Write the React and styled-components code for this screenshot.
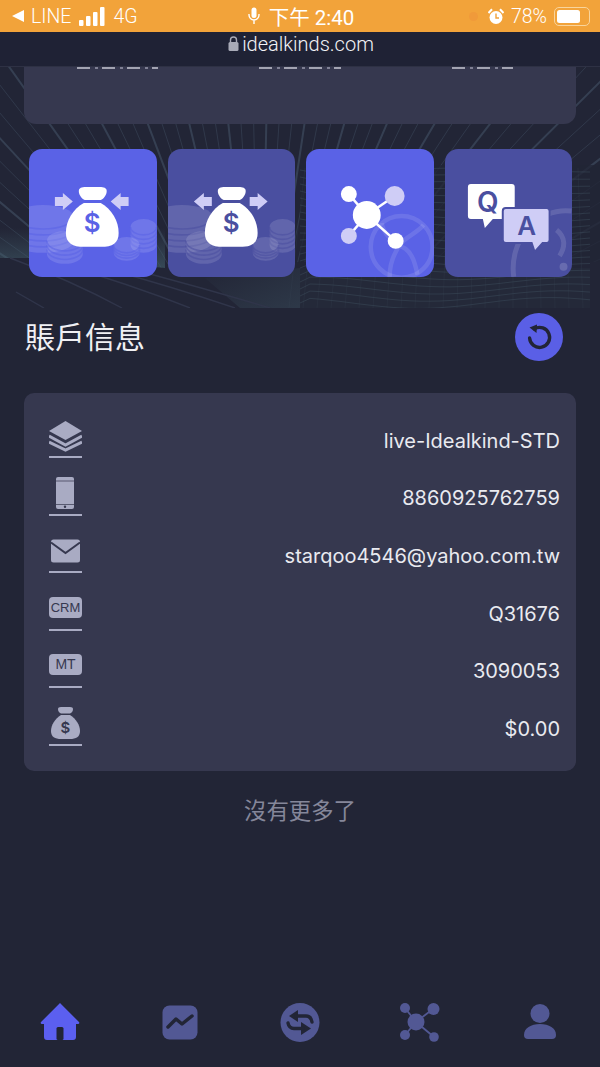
import styled, { createGlobalStyle } from 'styled-components';

const bg = '#222536';
const panel = '#36384f';
const bright = '#5a62e6';
const dim = '#4a4fa0';
const lilac = '#cfcdf6';
const iconGray = '#a9abc3';
const navGray = '#525894';
const navActive = '#5b5ff0';

const GlobalStyle = createGlobalStyle`
  html, body {
    margin: 0;
    padding: 0;
    background: ${bg};
  }
  * {
    box-sizing: border-box;
  }
`;

const accountRows = [
  { icon: 'stack', value: 'live-Idealkind-STD' },
  { icon: 'phone', value: '8860925762759' },
  { icon: 'mail', value: 'starqoo4546@yahoo.com.tw' },
  { icon: 'crm', value: 'Q31676' },
  { icon: 'mt', value: '3090053' },
  { icon: 'bag', value: '$0.00' },
];

// background mesh lines, worked out once
const fanLines = Array.from({ length: 60 }, (_, i) => {
  const a = Math.PI * (1.1 + (i / 59) * 0.8);
  return { x: 260 + Math.cos(a) * 600, y: 420 + Math.sin(a) * 600, strong: i % 3 === 0 };
});

const wavePath = (y, amp, phase) => {
  let d = `M300 ${y}`;
  for (let x = 310; x <= 590; x += 10) {
    d += ` L${x} ${(y + Math.sin(x / 42 + phase) * amp).toFixed(1)}`;
  }
  return d;
};

const waves = Array.from({ length: 20 }, (_, i) => wavePath(170 + i * 7, 2 + i * 0.18, i * 0.22));
const ribs = Array.from({ length: 22 }, (_, i) => 305 + i * 13);
const curves = [
  'M10 258 Q70 280 122 308',
  'M60 264 Q130 284 190 308',
  'M110 270 Q170 286 235 308',
  'M150 274 Q210 290 270 308',
  'M16 292 Q30 300 44 308',
];

function Mesh() {
  return (
    <MeshSvg viewBox="0 67 600 241" preserveAspectRatio="none">
      <defs>
        <linearGradient id="glow" x1="0" y1="0" x2="0" y2="1">
          <stop offset="0" stopColor="#43606c" stopOpacity="0" />
          <stop offset="1" stopColor="#43606c" stopOpacity="0.6" />
        </linearGradient>
        <linearGradient id="floor" x1="0" y1="0" x2="1" y2="1">
          <stop offset="0" stopColor="#3f5664" stopOpacity="0" />
          <stop offset="1" stopColor="#3f5664" stopOpacity="0.4" />
        </linearGradient>
      </defs>
      {fanLines.map((l, i) => (
        <line
          key={i}
          x1="260"
          y1="420"
          x2={l.x}
          y2={l.y}
          stroke="#46566a"
          strokeWidth={l.strong ? 2 : 1}
          opacity={l.strong ? 0.55 : 0.4}
        />
      ))}
      <polygon points="0,262 0,228 165,228 165,268 60,262 30,258" fill="url(#glow)" />
      <polygon points="0,258 30,258 60,262 165,268 300,262 300,308 0,308" fill={bg} />
      <polygon points="205,278 300,268 300,308 240,308" fill="url(#floor)" />
      {curves.map((d, i) => (
        <path key={i} d={d} fill="none" stroke="#30354a" strokeWidth="1.4" />
      ))}
      <rect x="300" y="165" width="300" height="97" fill={bg} opacity="0.75" />
      <rect x="300" y="262" width="300" height="46" fill={bg} />
      <rect x="300" y="268" width="290" height="40" fill="#3f5664" opacity="0.08" />
      {waves.map((d, i) => (
        <path key={i} d={d} fill="none" stroke="#3e4d5c" strokeWidth="0.8" opacity="0.6" />
      ))}
      {ribs.map((x, i) => (
        <line key={i} x1={x} y1="168" x2={x - 16 + i} y2="308" stroke="#3e4d5c" strokeWidth="0.6" opacity="0.3" />
      ))}
    </MeshSvg>
  );
}

function Coins({ cx, top, bottom, rx, ry, n, tone }) {
  const cy = top + ry;
  const low = bottom - ry;
  const step = (low - cy) / n;
  return (
    <g>
      <path
        d={`M${cx - rx} ${cy} A${rx} ${ry} 0 0 1 ${cx + rx} ${cy} V${low} A${rx} ${ry} 0 0 1 ${cx - rx} ${low} Z`}
        fill="#fff"
        fillOpacity="0.13"
      />
      {Array.from({ length: n }, (_, i) => {
        const y = cy + step * i;
        return (
          <path
            key={i}
            d={`M${cx - rx} ${y} A${rx} ${ry} 0 0 0 ${cx + rx} ${y}`}
            fill="none"
            stroke={tone}
            strokeOpacity="0.55"
            strokeWidth="1.6"
          />
        );
      })}
    </g>
  );
}

function BagShape({ fill, dollar }) {
  return (
    <g>
      <path
        d="M50 42 C50 39 53 38 57 38 C60 38 67 38 71 38 C75 38 78 39 78 42 C78 46 75 50 72 51 L56 51 C53 50 50 46 50 42 Z"
        fill={fill}
      />
      <path
        d="M55 54 L72 54 C83 60 90 72 90 84 C90 94 84 98 72 98 L55 98 C44 98 37 94 37 84 C37 72 44 60 55 54 Z"
        fill={fill}
      />
      <text x="63.5" y="83" textAnchor="middle" fontFamily="'Inter', sans-serif" fontWeight="600" fontSize="26" fill={dollar}>
        $
      </text>
    </g>
  );
}

function MoneyTile({ flow, tone }) {
  const arrows =
    flow === 'in'
      ? ['M26 48 H34 V44 L44 52.5 L34 61 V57 H26 Z', 'M100 48 H92 V44 L82 52.5 L92 61 V57 H100 Z']
      : ['M44 48 H36 V44 L26 52.5 L36 61 V57 H44 Z', 'M82 48 H90 V44 L100 52.5 L90 61 V57 H82 Z'];
  return (
    <TileArt viewBox="0 0 128 128">
      <Coins cx={14} top={56} bottom={104} rx={31} ry={12} n={4} tone={tone} />
      <Coins cx={36} top={82} bottom={115} rx={18} ry={10} n={3} tone={tone} />
      <Coins cx={115} top={70} bottom={104} rx={13} ry={8} n={4} tone={tone} />
      <Coins cx={98} top={88} bottom={112} rx={13} ry={8} n={3} tone={tone} />
      {arrows.map((d) => (
        <path key={d} d={d} fill={lilac} />
      ))}
      <BagShape fill="#fff" dollar={tone} />
    </TileArt>
  );
}

function NetworkTile() {
  return (
    <TileArt viewBox="0 0 128 128">
      <g fill="none" stroke="#fff" strokeOpacity="0.11" strokeWidth="4.5">
        <circle cx="96" cy="98" r="31" />
        <path d="M76 74 C78 88 92 96 100 100 C108 106 110 118 112 126" />
        <path d="M118 76 C112 84 100 88 96 94 C88 104 84 116 84 128" />
      </g>
      <g stroke="#fff" strokeWidth="2.5">
        <line x1="43" y1="45" x2="61" y2="66" />
        <line x1="89" y1="47" x2="61" y2="66" />
        <line x1="43" y1="87" x2="61" y2="66" />
        <line x1="90" y1="92" x2="61" y2="66" />
      </g>
      <circle cx="61" cy="66" r="14" fill="#fff" />
      <circle cx="43" cy="45" r="8" fill="#fff" />
      <circle cx="89" cy="47" r="10" fill={lilac} />
      <circle cx="43" cy="87" r="8" fill={lilac} />
      <circle cx="90" cy="92" r="8" fill="#fff" />
    </TileArt>
  );
}

function QaTile() {
  return (
    <TileArt viewBox="0 0 128 128">
      <g fill="none" stroke="#fff" strokeOpacity="0.13" strokeWidth="5">
        <path d="M69 128 C64 92 92 58 127 62" />
        <path d="M112 81 C121 88 121 98 115 107" />
      </g>
      <circle cx="119" cy="118" r="4" fill="#fff" fillOpacity="0.16" />
      <path
        d="M26 35 H67 Q70 35 70 38 V67 Q70 70 67 70 H48 L40 79 L38 70 H26 Q23 70 23 67 V38 Q23 35 26 35 Z"
        fill="#fff"
      />
      <text x="43" y="63" textAnchor="middle" fontFamily="'Inter', sans-serif" fontWeight="600" fontSize="28" fill={dim}>
        Q
      </text>
      <path
        d="M61 59 H102 Q105 59 105 62 V91 Q105 94 102 94 H98 L90 103 L87 94 H61 Q58 94 58 91 V62 Q58 59 61 59 Z"
        fill={lilac}
        stroke={dim}
        strokeWidth="2"
      />
      <text x="82" y="86" textAnchor="middle" fontFamily="'Inter', sans-serif" fontWeight="600" fontSize="26" fill={dim}>
        A
      </text>
    </TileArt>
  );
}

function RowIcon({ name }) {
  if (name === 'stack') {
    return (
      <svg width="33" height="44" viewBox="0 0 33 44">
        <path d="M16.5 9 L33 19 L16.5 28 L0 19 Z" fill={iconGray} />
        <path d="M0 24 L16.5 33 L33 24" fill="none" stroke={iconGray} strokeWidth="3" />
        <path d="M0 30 L16.5 38 L33 30" fill="none" stroke={iconGray} strokeWidth="3" />
      </svg>
    );
  }
  if (name === 'phone') {
    return (
      <svg width="33" height="44" viewBox="0 0 33 44">
        <rect x="7" y="7" width="18" height="32" rx="2" fill={iconGray} />
        <rect x="7" y="10.5" width="18" height="1" fill={panel} opacity="0.7" />
        <rect x="7" y="34" width="18" height="1" fill={panel} opacity="0.7" />
        <circle cx="16" cy="36.8" r="1.2" fill={panel} />
      </svg>
    );
  }
  if (name === 'mail') {
    return (
      <svg width="33" height="44" viewBox="0 0 33 44">
        <rect x="2" y="12.5" width="29" height="23" rx="2.5" fill={iconGray} />
        <path d="M2 15.5 L16.5 26 L31 15.5" fill="none" stroke={panel} strokeWidth="2" />
      </svg>
    );
  }
  if (name === 'crm' || name === 'mt') {
    return (
      <svg width="33" height="44" viewBox="0 0 33 44">
        <rect x="0" y="12" width="33" height="21" rx="4" fill={iconGray} />
        <text x="16.5" y="27" textAnchor="middle" fontFamily="'Liberation Sans', sans-serif" fontSize={name === 'crm' ? 13 : 14} fill={panel}>
          {name.toUpperCase()}
        </text>
      </svg>
    );
  }
  return (
    <svg width="33" height="44" viewBox="0 0 33 44">
      <path d="M9 9 Q9 7 12 7 H21 Q24 7 24 9 Q24 12 21 13.5 H12 Q9 12 9 9 Z" fill={iconGray} />
      <path d="M12 15 H21 C27 19 31 25 31 31 C31 37 27 39 21 39 H12 C6 39 2 37 2 31 C2 25 6 19 12 15 Z" fill={iconGray} />
      <text x="16.5" y="33" textAnchor="middle" fontFamily="'Inter', sans-serif" fontWeight="600" fontSize="15" fill={panel}>
        $
      </text>
    </svg>
  );
}

function HomeIcon() {
  return (
    <svg width="40" height="38" viewBox="0 0 40 38">
      <path d="M20 0 L39 19 Q40 21 38 21 H36 V34 Q36 37 33 37 H7 Q4 37 4 34 V21 H2 Q0 21 1 19 Z" fill={navActive} />
      <rect x="16.5" y="24" width="7" height="13" rx="1.5" fill={bg} />
    </svg>
  );
}

function ChartIcon() {
  return (
    <svg width="36" height="35" viewBox="0 0 36 35">
      <rect x="0.5" y="0.5" width="35" height="34" rx="7" fill={navGray} />
      <path d="M6 22 L14 14 L20 19 L30 11" fill="none" stroke={bg} strokeWidth="3.5" strokeLinecap="round" strokeLinejoin="round" />
    </svg>
  );
}

function SwapIcon() {
  return (
    <svg width="40" height="39" viewBox="0 0 40 39">
      <circle cx="20" cy="19.5" r="19.5" fill={navGray} />
      <path d="M9 13 L18 7 V19 Z" fill={bg} />
      <path d="M16 13 H26 Q31 13 32 19" fill="none" stroke={bg} strokeWidth="3.4" strokeLinecap="round" />
      <path d="M31 25.5 L21 19 V32 Z" fill={bg} />
      <path d="M23 25.5 H14 Q9 25.5 8 20" fill="none" stroke={bg} strokeWidth="3.4" strokeLinecap="round" />
    </svg>
  );
}

function NetIcon() {
  return (
    <svg width="40" height="39" viewBox="0 0 40 39">
      <g stroke={navGray} strokeWidth="1.8">
        <line x1="5" y1="5" x2="16" y2="19" />
        <line x1="33" y1="6" x2="16" y2="19" />
        <line x1="5" y1="32" x2="16" y2="19" />
        <line x1="34" y1="34" x2="16" y2="19" />
      </g>
      <circle cx="16" cy="19" r="8.5" fill={navGray} />
      <circle cx="5" cy="5" r="5" fill={navGray} />
      <circle cx="33.5" cy="6" r="6" fill={navGray} />
      <circle cx="5" cy="32" r="5" fill={navGray} />
      <circle cx="34" cy="34" r="4.8" fill={navGray} />
    </svg>
  );
}

function UserIcon() {
  return (
    <svg width="32" height="36" viewBox="0 0 32 36">
      <ellipse cx="16" cy="9.5" rx="9.5" ry="9.5" fill={navGray} />
      <path d="M0 31 C0 24 7 20 16 20 C25 20 32 24 32 31 Q32 35 28 35 H4 Q0 35 0 31 Z" fill={navGray} />
    </svg>
  );
}

export default function App() {
  return (
    <Page>
      <GlobalStyle />
      <StatusBar>
        <StatusSide>
          <BackArrow />
          <span>LINE</span>
          <Signal viewBox="0 0 27 19" width="27" height="19">
            <rect x="0" y="13" width="4.5" height="6" rx="1" fill="#fff" />
            <rect x="7" y="9" width="4.5" height="10" rx="1" fill="#fff" />
            <rect x="14" y="5" width="4.5" height="14" rx="1" fill="#fff" />
            <rect x="21" y="0" width="4.5" height="19" rx="1" fill="#fff" />
          </Signal>
          <span>4G</span>
        </StatusSide>
        <StatusClock>
          <svg width="12" height="18" viewBox="0 0 12 18">
            <rect x="3.5" y="0.5" width="5" height="10.5" rx="2.5" fill="#fff" />
            <path d="M1 7 V8 A5 5 0 0 0 11 8 V7 M6 13 V17" fill="none" stroke="#fff" strokeWidth="1.4" />
          </svg>
          <span>下午 2:40</span>
        </StatusClock>
        <StatusSide $end>
          <RecordDot />
          <svg width="16" height="17" viewBox="0 0 16 17">
            <circle cx="8" cy="9.5" r="6.5" fill="#fff" />
            <path d="M8 5.5 V10 H11" fill="none" stroke="#f2a33a" strokeWidth="1.4" />
            <path d="M0.5 5 L4 1.2 M15.5 5 L12 1.2" stroke="#fff" strokeWidth="2" />
          </svg>
          <span>78%</span>
          <Battery>
            <BatteryFill />
          </Battery>
        </StatusSide>
      </StatusBar>
      <UrlBar>
        <svg width="11" height="15" viewBox="0 0 11 15">
          <rect x="0.5" y="6" width="10" height="9" rx="1.5" fill="#a9abb8" />
          <path d="M2.5 6 V4 A3 3 0 0 1 8.5 4 V6" fill="none" stroke="#a9abb8" strokeWidth="1.4" />
        </svg>
        <span>idealkinds.com</span>
      </UrlBar>
      <Content>
        <Mesh />
        <TopCard>
          <ScrolledLabel $width={81} $offset={0} />
          <ScrolledLabel $width={82} $offset={101} />
          <ScrolledLabel $width={61} $offset={111} />
        </TopCard>
        <Tiles>
          <Tile $tone={bright}>
            <MoneyTile flow="in" tone={bright} />
          </Tile>
          <Tile $tone={dim}>
            <MoneyTile flow="out" tone={dim} />
          </Tile>
          <Tile $tone={bright}>
            <NetworkTile />
          </Tile>
          <Tile $tone={dim}>
            <QaTile />
          </Tile>
        </Tiles>
        <SectionHead>
          <Title>賬戶信息</Title>
          <RefreshButton>
            <svg width="48" height="48" viewBox="0 0 48 48">
              <path d="M19.5 15.8 A10 10 0 1 1 14.6 25" fill="none" stroke={bg} strokeWidth="3.4" strokeLinecap="round" />
              <path d="M14.5 14.5 L22 11.5 L21.5 20 Z" fill={bg} />
            </svg>
          </RefreshButton>
        </SectionHead>
        <InfoCard>
          {accountRows.map((row) => (
            <InfoRow key={row.icon}>
              <IconCell>
                <RowIcon name={row.icon} />
              </IconCell>
              <Value>{row.value}</Value>
            </InfoRow>
          ))}
        </InfoCard>
        <NoMore>沒有更多了</NoMore>
        <BottomNav>
          <NavItem><HomeIcon /></NavItem>
          <NavItem><ChartIcon /></NavItem>
          <NavItem><SwapIcon /></NavItem>
          <NavItem><NetIcon /></NavItem>
          <NavItem><UserIcon /></NavItem>
        </BottomNav>
      </Content>
    </Page>
  );
}

const Page = styled.div`
  width: 600px;
  height: 1067px;
  overflow: hidden;
  display: flex;
  flex-direction: column;
  background: ${bg};
  font-family: 'Inter', 'Noto Sans CJK TC', sans-serif;
  color: #fff;
`;

const StatusBar = styled.div`
  height: 32px;
  flex: none;
  padding: 0 10px 0 12px;
  background: #f2a33a;
  display: grid;
  grid-template-columns: 1fr auto 1fr;
  align-items: center;
  font-family: 'Roboto', 'Noto Sans CJK TC', sans-serif;
  font-size: 19.5px;
  font-weight: 300;
  color: #fff;
`;

const StatusSide = styled.div`
  display: flex;
  align-items: center;
  gap: 7px;
  justify-content: ${(p) => (p.$end ? 'flex-end' : 'flex-start')};
`;

const BackArrow = styled.i`
  width: 0;
  height: 0;
  border-style: solid;
  border-width: 6.5px 12px 6.5px 0;
  border-color: transparent #fff transparent transparent;
`;

const Signal = styled.svg`
  margin-left: 1px;
`;

const StatusClock = styled.div`
  display: flex;
  align-items: center;
  gap: 9px;
  font-size: 20.5px;
  font-weight: 400;
`;

const RecordDot = styled.i`
  width: 9px;
  height: 9px;
  margin-right: 3px;
  border-radius: 50%;
  background: #f09a3a;
`;

const Battery = styled.div`
  width: 36px;
  height: 19px;
  padding: 2px;
  border: 1.5px solid #f9d49b;
  border-radius: 5px;
`;

const BatteryFill = styled.div`
  width: 78%;
  height: 100%;
  border-radius: 2.5px;
  background: #fff;
`;

const UrlBar = styled.div`
  height: 35px;
  flex: none;
  padding-bottom: 11px;
  padding-left: 2px;
  background: #1f2235;
  border-bottom: 1px solid #2e3144;
  display: flex;
  align-items: center;
  justify-content: center;
  gap: 3px;
  font-family: 'Roboto', sans-serif;
  font-size: 20px;
  font-weight: 300;
  color: #f2f2f6;
`;

const Content = styled.main`
  position: relative;
  flex: 1;
  display: flex;
  flex-direction: column;
`;

const MeshSvg = styled.svg`
  position: absolute;
  top: 0;
  left: 0;
  width: 600px;
  height: 241px;
`;

const TopCard = styled.section`
  position: relative;
  height: 57px;
  margin: 0 24px;
  padding-left: 53px;
  background: ${panel};
  border-radius: 0 0 12px 12px;
  display: flex;
`;

// last pixels of the labels that have scrolled up under the address bar
const ScrolledLabel = styled.i`
  width: ${(p) => p.$width}px;
  height: 2px;
  margin-left: ${(p) => p.$offset}px;
  background: repeating-linear-gradient(90deg, #a3a4b2 0 13px, transparent 13px 18px, #7f8094 18px 21px, transparent 21px 25px);
`;

const Tiles = styled.div`
  position: relative;
  margin-top: 25px;
  padding: 0 28px 0 29px;
  display: grid;
  grid-template-columns: repeat(4, 1fr);
  gap: 11px;
`;

const Tile = styled.div`
  height: 128px;
  border-radius: 13px;
  overflow: hidden;
  background: ${(p) => p.$tone};
`;

const TileArt = styled.svg`
  display: block;
  width: 100%;
  height: 100%;
`;

const SectionHead = styled.div`
  position: relative;
  margin-top: 36px;
  padding: 0 37px 0 25px;
  display: flex;
  align-items: center;
  justify-content: space-between;
`;

const Title = styled.h2`
  margin: 0;
  padding-bottom: 4px;
  font-size: 30px;
  font-weight: 400;
  color: #f0f0f4;
`;

const RefreshButton = styled.div`
  width: 48px;
  height: 48px;
  border-radius: 50%;
  background: #5a5fe6;
`;

const InfoCard = styled.section`
  margin: 32px 24px 0;
  padding: 19px 16px 13px 25px;
  background: ${panel};
  border-radius: 10px;
  display: grid;
  grid-auto-rows: 57.6px;
`;

const InfoRow = styled.div`
  display: flex;
  align-items: center;
  justify-content: space-between;
`;

const IconCell = styled.div`
  align-self: flex-start;
  width: 33px;
  height: 46px;
  border-bottom: 2px solid ${iconGray};

  svg {
    display: block;
  }
`;

const Value = styled.span`
  font-size: 20px;
  color: #e9eaf0;
`;

const NoMore = styled.p`
  margin: 28px 0 0;
  text-align: center;
  font-size: 22.4px;
  line-height: 24px;
  color: #85879a;
`;

const BottomNav = styled.nav`
  margin-top: auto;
  height: 90px;
  display: grid;
  grid-template-columns: repeat(5, 120px);
`;

const NavItem = styled.div`
  display: flex;
  align-items: center;
  justify-content: center;
`;
